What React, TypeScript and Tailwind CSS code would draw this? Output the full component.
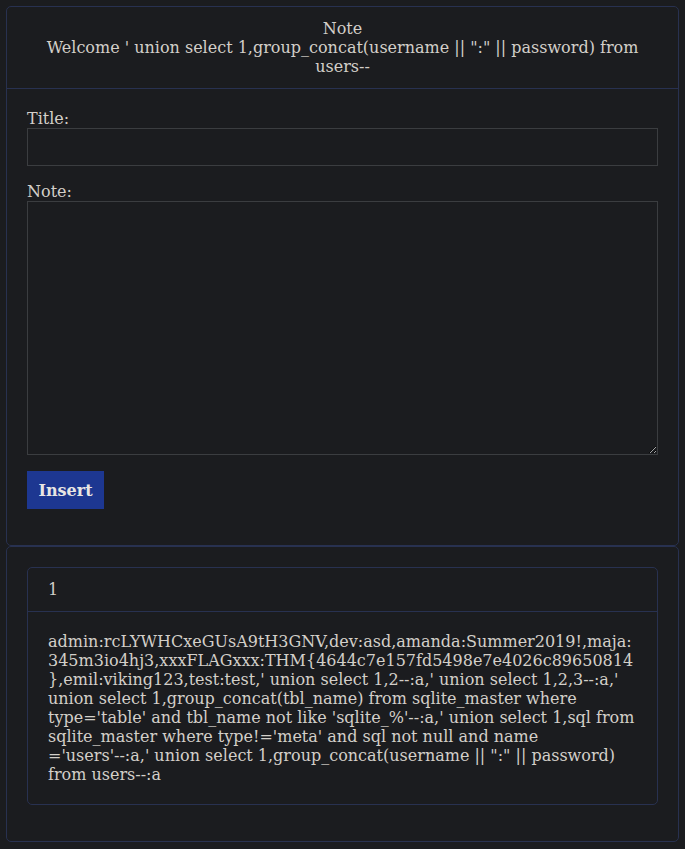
import React from "react";

export default function App() {
  const body =
    "admin:rcLYWHCxeGUsA9tH3GNV,dev:asd,amanda:Summer2019!,maja:345m3io4hj3,xxxFLAGxxx:THM{4644c7e157fd5498e7e4026c89650814},emil:viking123,test:test,' union select 1,2--:a,' union select 1,2,3--:a,' union select 1,group_concat(tbl_name) from sqlite_master where type='table' and tbl_name not like 'sqlite_%'--:a,' union select 1,sql from sqlite_master where type!='meta' and sql not null and name ='users'-\u2060-:a,' union select 1,group_concat(username || \":\" || password) from users--:a";
  return (
    <div
      className="min-h-[849px] bg-[#1b1c1f] text-[#d3cfc9] text-[16px] leading-[19px] pt-[6px] pl-[6px] pr-[6px]"
      style={{ fontFamily: '"DejaVu Serif", serif' }}
    >
      <div className="rounded-[5px] border border-[#283150] bg-[#1b1c1f]">
        <div className="border-b border-[#283150] px-5 py-[12px] text-center">
          <div>Note</div>
          <div>Welcome ' union select 1,group_concat(username || ":" || password) from users--</div>
        </div>
        <div className="p-5">
          <div className="mb-4 flex flex-col">
            <label>Title:</label>
            <input className="h-[38px] w-full border border-[#3b3d40] bg-[#1b1c1f] outline-none" />
            <label className="mt-4">Note:</label>
            <textarea className="h-[254px] w-full border border-[#3b3d40] bg-[#1b1c1f] outline-none" />
            <div className="mt-4">
              <button className="h-[38px] w-[77px] bg-[#1d3791] font-bold text-[#e8e6e3]">Insert</button>
            </div>
          </div>
        </div>
      </div>
      <div className="rounded-[5px] border border-[#283150] bg-[#1b1c1f] p-5">
        <div className="mb-4 rounded-[5px] border border-[#283150]">
          <div className="border-b border-[#283150] px-5 py-[12px]">1</div>
          <div className="p-5 break-words">{body}</div>
        </div>
      </div>
    </div>
  );
}
